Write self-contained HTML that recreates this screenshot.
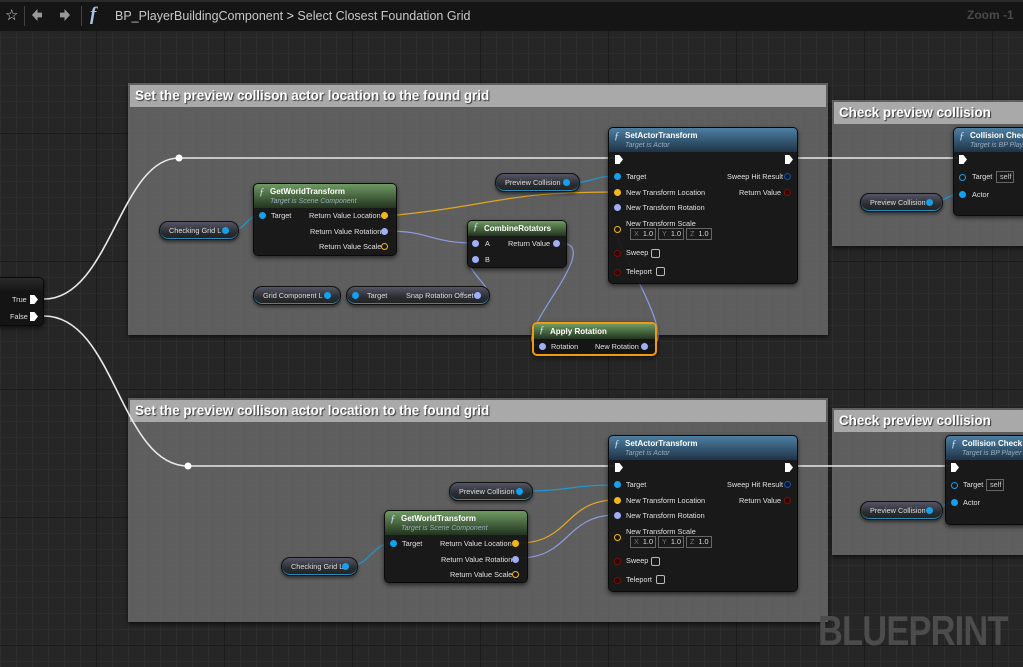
<!DOCTYPE html>
<html><head><meta charset="utf-8"><style>
*{margin:0;padding:0;box-sizing:border-box}
body{width:1023px;height:667px;overflow:hidden;position:relative;font-family:"Liberation Sans",sans-serif;
background-color:#262626;
background-image:linear-gradient(#1b1b1b 1px,transparent 1px),linear-gradient(90deg,#1b1b1b 1px,transparent 1px),linear-gradient(#2e2e2e 1px,transparent 1px),linear-gradient(90deg,#2e2e2e 1px,transparent 1px);
background-size:128px 128px,128px 128px,16px 16px,16px 16px;background-position:-32px 5px,-32px 5px,0 5px,0 5px}
.a{position:absolute}
.top{left:0;top:0;width:1023px;height:31px;background:#151515;border-top:2px solid #2a2a2a}
.cm{position:absolute;background:rgba(110,110,110,.78);box-shadow:0 2px 4px rgba(0,0,0,.6)}
.ch{position:absolute;left:2px;right:2px;top:2px;height:22px;background:#a9a9a9;color:#fff;font-weight:bold;font-size:13.4px;line-height:22px;padding-left:5px;text-shadow:1px 1px 1px #333;white-space:nowrap;overflow:hidden}
.node{position:absolute;background:rgba(20,20,20,.93);border:1px solid #0a0a0a;border-radius:5px;box-shadow:0 2px 5px rgba(0,0,0,.6);overflow:hidden}
.hb{position:absolute;left:0;right:0;top:0;height:24px;background:linear-gradient(#4d7fa3,#1e3346)}
.hg{position:absolute;left:0;right:0;top:0;height:24px;background:linear-gradient(#6f9a62,#22331f)}
.ttl{position:absolute;left:16px;top:3px;font-size:8px;font-weight:bold;color:#fff;white-space:nowrap}
.sub{position:absolute;left:16px;top:14px;font-size:7px;font-style:italic;color:#9ab;white-space:nowrap}
.f{position:absolute;left:5px;top:2px;font-family:"Liberation Serif",serif;font-style:italic;font-size:11px;color:#cde}
.t{position:absolute;font-size:7.3px;color:#e0e0e0;white-space:nowrap;line-height:9px}
.p{position:absolute;width:7px;height:7px;border-radius:50%}
.blue{background:#14a0ee}.yel{background:#f2b81a}.vio{background:#a0aef5}
.ring{border:1.5px solid #f2b81a;background:transparent}
.red{border:1.5px solid #7a0e0e;background:#300}
.bring{border:1.5px solid #14a0ee;background:transparent}
.dblue{border:1.5px solid #1850a0;background:#061a33}
.ex{position:absolute;width:8px;height:9px;background:#fff;clip-path:polygon(0 0,55% 0,100% 50%,55% 100%,0 100%)}
.pill{position:absolute;height:19px;border-radius:9px;background:linear-gradient(#556,#2a2d30 60%,#222);border:1px solid #111;box-shadow:0 -1px 0 #2a8ab8 inset,0 2px 3px rgba(0,0,0,.5);font-size:7.3px;color:#ddd;line-height:17px;white-space:nowrap;padding-left:9px}
.bx{position:absolute;height:12px;border:1px solid #666;font-size:7.3px;color:#ddd;line-height:10px;padding-left:3px}
.bx i{color:#777;font-style:normal;margin-right:4px}
.cb{position:absolute;width:9px;height:9px;border:1.5px solid #bbb;border-radius:2px}
</style></head><body>
<div class="a top"></div>
<div class="a" style="left:5px;top:6px;font-size:15px;color:#ddd">☆</div>
<div class="a" style="left:24px;top:6px;width:1px;height:20px;background:#444"></div>
<div class="a" style="left:32px;top:9px;width:10px;height:12px;background:#999;clip-path:polygon(0 50%,55% 0,55% 30%,100% 30%,100% 70%,55% 70%,55% 100%)"></div>
<div class="a" style="left:60px;top:9px;width:10px;height:12px;background:#999;clip-path:polygon(100% 50%,45% 0,45% 30%,0 30%,0 70%,45% 70%,45% 100%)"></div>
<div class="a" style="left:81px;top:6px;width:1px;height:20px;background:#444"></div>
<div class="a" style="left:90px;top:4px;font-family:'Liberation Serif',serif;font-style:italic;font-weight:bold;font-size:19px;color:#a9c3e8">f</div>
<div class="a" style="left:115px;top:9px;font-size:12.5px;color:#c8c8c8;white-space:nowrap">BP_PlayerBuildingComponent <span style="color:#ddd">&gt;</span> Select Closest Foundation Grid</div>
<div class="a" style="left:967px;top:8px;font-size:12px;font-weight:bold;color:#4a4a4a;white-space:nowrap">Zoom -1</div>

<div class="cm" style="left:128px;top:83px;width:700px;height:252px"><div class="ch">Set the preview collison actor location to the found grid</div></div>
<div class="cm" style="left:128px;top:398px;width:700px;height:224px"><div class="ch">Set the preview collison actor location to the found grid</div></div>
<div class="cm" style="left:832px;top:100px;width:200px;height:146px"><div class="ch">Check preview collision</div></div>
<div class="cm" style="left:832px;top:408px;width:200px;height:147px"><div class="ch">Check preview collision</div></div>

<div class="a" style="left:818px;top:607px;font-size:42px;font-weight:bold;color:#4c4c4c;transform:scaleX(.82);transform-origin:0 0;letter-spacing:-1px">BLUEPRINT</div>

<svg class="a" style="left:0;top:0" width="1023" height="667" fill="none">
<g stroke="#e8e8e8" stroke-width="1.6">
<path d="M44,299 C110,299 120,158 179,158 L616,158"/><path d="M798,158 L958,158"/>
<path d="M44,316 C115,316 120,466 188,466 L616,466"/><path d="M798,466 L950,466"/>
</g>
<circle cx="179" cy="158" r="3.5" fill="#fff"/><circle cx="188" cy="466" r="3.5" fill="#fff"/>
<g stroke="#1a9ad8" stroke-width="1.2">
<path d="M231,230 C248,230 245,215 262,215"/><path d="M570,183 C590,183 596,176 616,176"/>
<path d="M933,202 C945,202 948,194 960,194"/>
<path d="M523,491 C570,491 570,485 616,485"/><path d="M349,566 C370,566 372,543 393,543"/>
<path d="M933,510 C942,510 944,502 952,502"/>
</g>
<g stroke="#e0a820" stroke-width="1.2"><path d="M388,216 C500,205 500,192 616,192"/><path d="M519,543 C570,543 565,500 616,500"/></g>
<g stroke="#8d9ce0" stroke-width="1.2">
<path d="M388,231 C430,231 430,243 475,243"/><path d="M481,295 C505,295 455,265 475,259"/>
<path d="M560,243 C610,243 500,346 541,346"/><path d="M648,346 C690,346 585,207 616,207"/>
<path d="M519,558 C570,558 565,515 616,515"/>
</g>
</svg>

<div class="node" style="left:-6px;top:277px;width:50px;height:49px;background:linear-gradient(#2a2a2a,#141414 30%)"></div>
<div class="t" style="left:12px;top:295px">True</div><div class="ex" style="left:30px;top:295px"></div>
<div class="t" style="left:10px;top:312px">False</div><div class="ex" style="left:30px;top:312px"></div>

<div class="node" style="left:608px;top:127px;width:190px;height:157px"><div class="hb"></div><div class="f">ƒ</div><div class="ttl">SetActorTransform</div><div class="sub">Target is Actor</div></div>
<div class="ex" style="left:615px;top:155px"></div><div class="ex" style="left:785px;top:155px"></div>
<div class="p blue" style="left:614px;top:173px"></div><div class="t" style="left:626px;top:172px">Target</div>
<div class="p yel" style="left:614px;top:189px"></div><div class="t" style="left:626px;top:188px">New Transform Location</div>
<div class="p vio" style="left:614px;top:204px"></div><div class="t" style="left:626px;top:203px">New Transform Rotation</div>
<div class="p ring" style="left:614px;top:226px"></div><div class="t" style="left:626px;top:219px">New Transform Scale</div>
<div class="bx" style="left:630px;top:228px;width:26px"><i>X</i>1.0</div><div class="bx" style="left:658px;top:228px;width:26px"><i>Y</i>1.0</div><div class="bx" style="left:686px;top:228px;width:26px"><i>Z</i>1.0</div>
<div class="p red" style="left:614px;top:250px"></div><div class="t" style="left:626px;top:248px">Sweep</div><div class="cb" style="left:651px;top:249px"></div>
<div class="p red" style="left:614px;top:269px"></div><div class="t" style="left:626px;top:267px">Teleport</div><div class="cb" style="left:656px;top:267px"></div>
<div class="t" style="left:727px;top:172px">Sweep Hit Result</div><div class="p dblue" style="left:784px;top:173px"></div>
<div class="t" style="left:739px;top:188px">Return Value</div><div class="p red" style="left:784px;top:189px"></div>

<div class="node" style="left:608px;top:435px;width:190px;height:157px"><div class="hb"></div><div class="f">ƒ</div><div class="ttl">SetActorTransform</div><div class="sub">Target is Actor</div></div>
<div class="ex" style="left:615px;top:463px"></div><div class="ex" style="left:785px;top:463px"></div>
<div class="p blue" style="left:614px;top:481px"></div><div class="t" style="left:626px;top:480px">Target</div>
<div class="p yel" style="left:614px;top:497px"></div><div class="t" style="left:626px;top:496px">New Transform Location</div>
<div class="p vio" style="left:614px;top:512px"></div><div class="t" style="left:626px;top:511px">New Transform Rotation</div>
<div class="p ring" style="left:614px;top:534px"></div><div class="t" style="left:626px;top:527px">New Transform Scale</div>
<div class="bx" style="left:630px;top:536px;width:26px"><i>X</i>1.0</div><div class="bx" style="left:658px;top:536px;width:26px"><i>Y</i>1.0</div><div class="bx" style="left:686px;top:536px;width:26px"><i>Z</i>1.0</div>
<div class="p red" style="left:614px;top:558px"></div><div class="t" style="left:626px;top:556px">Sweep</div><div class="cb" style="left:651px;top:557px"></div>
<div class="p red" style="left:614px;top:577px"></div><div class="t" style="left:626px;top:575px">Teleport</div><div class="cb" style="left:656px;top:575px"></div>
<div class="t" style="left:727px;top:480px">Sweep Hit Result</div><div class="p dblue" style="left:784px;top:481px"></div>
<div class="t" style="left:739px;top:496px">Return Value</div><div class="p red" style="left:784px;top:497px"></div>

<div class="node" style="left:253px;top:183px;width:144px;height:73px"><div class="hg"></div><div class="f">ƒ</div><div class="ttl">GetWorldTransform</div><div class="sub">Target is Scene Component</div></div>
<div class="p blue" style="left:259px;top:212px"></div><div class="t" style="left:271px;top:211px">Target</div>
<div class="t" style="left:309px;top:211px">Return Value Location</div><div class="p yel" style="left:381px;top:212px"></div>
<div class="t" style="left:310px;top:227px">Return Value Rotation</div><div class="p vio" style="left:381px;top:228px"></div>
<div class="t" style="left:319px;top:242px">Return Value Scale</div><div class="p ring" style="left:381px;top:243px"></div>

<div class="node" style="left:384px;top:510px;width:144px;height:73px"><div class="hg"></div><div class="f">ƒ</div><div class="ttl">GetWorldTransform</div><div class="sub">Target is Scene Component</div></div>
<div class="p blue" style="left:390px;top:540px"></div><div class="t" style="left:402px;top:539px">Target</div>
<div class="t" style="left:440px;top:539px">Return Value Location</div><div class="p yel" style="left:512px;top:540px"></div>
<div class="t" style="left:441px;top:555px">Return Value Rotation</div><div class="p vio" style="left:512px;top:556px"></div>
<div class="t" style="left:450px;top:570px">Return Value Scale</div><div class="p ring" style="left:512px;top:571px"></div>

<div class="node" style="left:467px;top:220px;width:100px;height:48px"><div class="hg" style="height:15px"></div><div class="f" style="top:0">ƒ</div><div class="ttl" style="top:3px">CombineRotators</div></div>
<div class="p vio" style="left:472px;top:240px"></div><div class="t" style="left:485px;top:239px">A</div>
<div class="t" style="left:508px;top:239px">Return Value</div><div class="p vio" style="left:553px;top:240px"></div>
<div class="p vio" style="left:472px;top:256px"></div><div class="t" style="left:485px;top:255px">B</div>

<div class="node" style="left:532px;top:322px;width:125px;height:34px;border:2px solid #f09a10"><div class="hg" style="height:15px"></div><div class="f" style="top:0">ƒ</div><div class="ttl" style="top:3px">Apply Rotation</div></div>
<div class="p vio" style="left:539px;top:343px"></div><div class="t" style="left:551px;top:342px">Rotation</div>
<div class="t" style="left:595px;top:342px">New Rotation</div><div class="p vio" style="left:641px;top:343px"></div>

<div class="node" style="left:953px;top:127px;width:80px;height:89px"><div class="hb"></div><div class="f">ƒ</div><div class="ttl">Collision Check</div><div class="sub">Target is BP Player</div></div>
<div class="ex" style="left:959px;top:155px"></div>
<div class="p bring" style="left:959px;top:174px"></div><div class="t" style="left:972px;top:172px">Target</div><div class="bx" style="left:996px;top:171px;width:18px;color:#ccc">self</div>
<div class="p blue" style="left:959px;top:191px"></div><div class="t" style="left:972px;top:190px">Actor</div>
<div class="node" style="left:945px;top:435px;width:88px;height:90px"><div class="hb"></div><div class="f">ƒ</div><div class="ttl">Collision Check</div><div class="sub">Target is BP Player</div></div>
<div class="ex" style="left:951px;top:463px"></div>
<div class="p bring" style="left:951px;top:482px"></div><div class="t" style="left:963px;top:480px">Target</div><div class="bx" style="left:986px;top:479px;width:18px;color:#ccc">self</div>
<div class="p blue" style="left:951px;top:499px"></div><div class="t" style="left:963px;top:498px">Actor</div>

<div class="pill" style="left:159px;top:221px;width:80px">Checking Grid L</div><div class="p blue" style="left:222px;top:227px"></div>
<div class="pill" style="left:495px;top:173px;width:85px">Preview Collision</div><div class="p blue" style="left:563px;top:179px"></div>
<div class="pill" style="left:253px;top:286px;width:88px">Grid Component L</div><div class="p blue" style="left:324px;top:292px"></div>
<div class="pill" style="left:346px;top:286px;width:144px;padding-left:20px">Target<span style="position:absolute;left:59px">Snap Rotation Offset</span></div><div class="p blue" style="left:352px;top:292px"></div><div class="p vio" style="left:474px;top:292px"></div>
<div class="pill" style="left:860px;top:193px;width:83px">Preview Collision</div><div class="p blue" style="left:926px;top:199px"></div>
<div class="pill" style="left:449px;top:482px;width:84px">Preview Collision</div><div class="p blue" style="left:516px;top:488px"></div>
<div class="pill" style="left:281px;top:557px;width:77px">Checking Grid L</div><div class="p blue" style="left:342px;top:563px"></div>
<div class="pill" style="left:860px;top:501px;width:83px">Preview Collision</div><div class="p blue" style="left:926px;top:507px"></div>
</body></html>
